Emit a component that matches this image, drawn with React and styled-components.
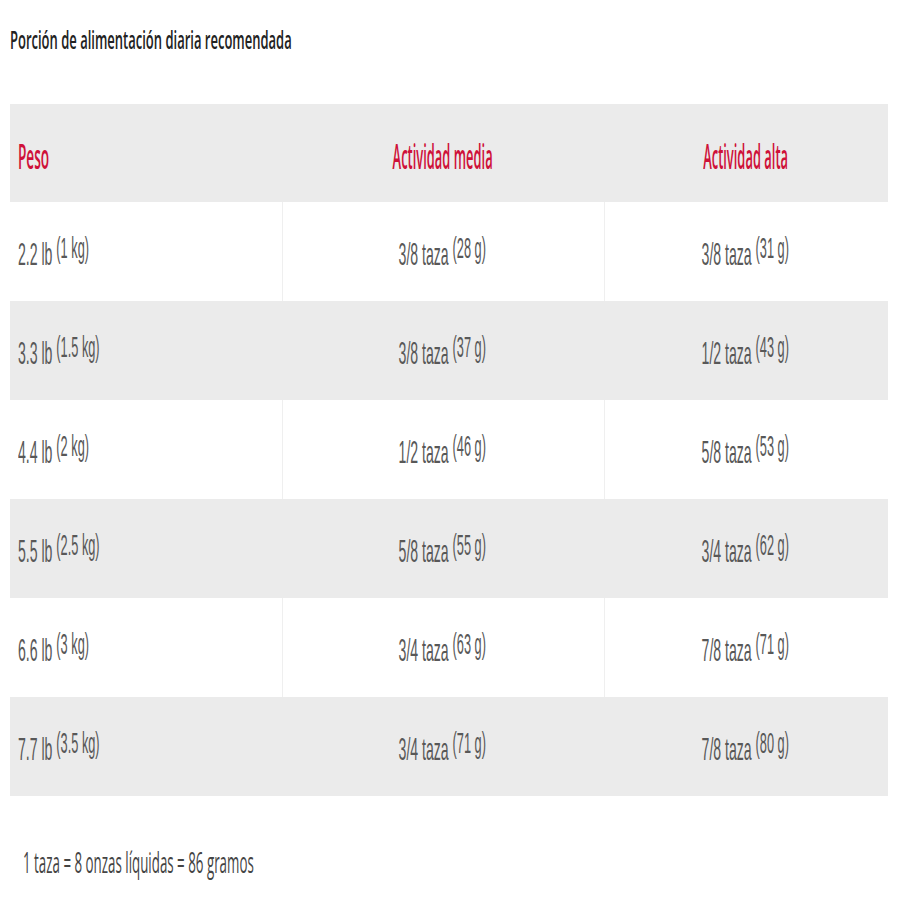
import React from "react";
import styled, { createGlobalStyle } from "styled-components";

const Global = createGlobalStyle`
  html, body { margin: 0; padding: 0; background: #ffffff; }
  body { font-family: "Open Sans", "Liberation Sans", sans-serif; }
`;

const Page = styled.div`
  width: 900px;
  height: 900px;
  padding: 0 12px 0 10px;
  box-sizing: border-box;
  display: flex;
  flex-direction: column;
`;

const Squeeze = styled.span`
  display: inline-block;
  white-space: nowrap;
  transform: scaleX(${(p) => p.$sx});
  transform-origin: ${(p) => (p.$align === "center" ? "center" : "left")} center;
`;

const Title = styled.h1`
  margin: 0;
  height: 104px;
  padding-top: 22px;
  box-sizing: border-box;
  font-family: "Open Sans", sans-serif;
  font-weight: 600;
  font-size: 26px;
  line-height: 34px;
  color: #222222;
`;

const Table = styled.div`
  width: 878px;
  display: grid;
  grid-template-columns: 272px 322px 284px;
`;

const Cell = styled.div`
  height: ${(p) => (p.$head ? 98 : 99)}px;
  box-sizing: border-box;
  display: flex;
  align-items: center;
  justify-content: ${(p) => (p.$align === "center" ? "center" : "flex-start")};
  padding: ${(p) => (p.$align === "center" ? "6px 2px 0 0" : "6px 0 0 7px")};
  background: ${(p) => (p.$shade ? "#ebebeb" : "#ffffff")};
  border-left: 1px solid
    ${(p) => (p.$divider && !p.$shade ? "#efefef" : "transparent")};
`;

const HeadText = styled.span`
  font-family: "Open Sans", sans-serif;
  font-weight: 600;
  font-size: 34px;
  line-height: 40px;
  color: #cf1139;
`;

const BodyText = styled.span`
  font-family: "Liberation Sans", Arial, sans-serif;
  font-weight: 400;
  font-size: 32px;
  line-height: 40px;
  color: #585858;
`;

const Sup = styled.span`
  font-size: 29px;
  position: relative;
  top: -7px;
  margin-left: 0;
`;

const Footer = styled.p`
  margin: 0;
  padding: 46px 0 0 13px;
  font-family: "Open Sans", sans-serif;
  font-weight: 400;
  font-size: 29px;
  line-height: 40px;
  color: #444444;
`;

const rows = [
  ["2.2 lb", "1 kg", "3/8 taza", "28 g", "3/8 taza", "31 g"],
  ["3.3 lb", "1.5 kg", "3/8 taza", "37 g", "1/2 taza", "43 g"],
  ["4.4 lb", "2 kg", "1/2 taza", "46 g", "5/8 taza", "53 g"],
  ["5.5 lb", "2.5 kg", "5/8 taza", "55 g", "3/4 taza", "62 g"],
  ["6.6 lb", "3 kg", "3/4 taza", "63 g", "7/8 taza", "71 g"],
  ["7.7 lb", "3.5 kg", "3/4 taza", "71 g", "7/8 taza", "80 g"],
];

const Value = ({ main, sub, align }) => (
  <Squeeze $sx={0.44} $align={align}>
    <BodyText>
      {main}
      <Sup>({sub})</Sup>
    </BodyText>
  </Squeeze>
);

export default function App() {
  return (
    <>
      <Global />
      <Page>
        <Title>
          <Squeeze $sx={0.5}>Porción de alimentación diaria recomendada</Squeeze>
        </Title>
        <Table>
          <Cell $head $shade>
            <Squeeze $sx={0.4}>
              <HeadText>Peso</HeadText>
            </Squeeze>
          </Cell>
          <Cell $head $shade $align="center">
            <Squeeze $sx={0.38} $align="center">
              <HeadText>Actividad media</HeadText>
            </Squeeze>
          </Cell>
          <Cell $head $shade $align="center">
            <Squeeze $sx={0.38} $align="center">
              <HeadText>Actividad alta</HeadText>
            </Squeeze>
          </Cell>
          {rows.map((r, i) => {
            const shade = i % 2 === 1;
            return (
              <React.Fragment key={r[0]}>
                <Cell $shade={shade}>
                  <Value main={r[0] + " "} sub={r[1]} />
                </Cell>
                <Cell $shade={shade} $divider $align="center">
                  <Value main={r[2] + " "} sub={r[3]} align="center" />
                </Cell>
                <Cell $shade={shade} $divider $align="center">
                  <Value main={r[4] + " "} sub={r[5]} align="center" />
                </Cell>
              </React.Fragment>
            );
          })}
        </Table>
        <Footer>
          <Squeeze $sx={0.46}>1 taza = 8 onzas líquidas = 86 gramos</Squeeze>
        </Footer>
      </Page>
    </>
  );
}
